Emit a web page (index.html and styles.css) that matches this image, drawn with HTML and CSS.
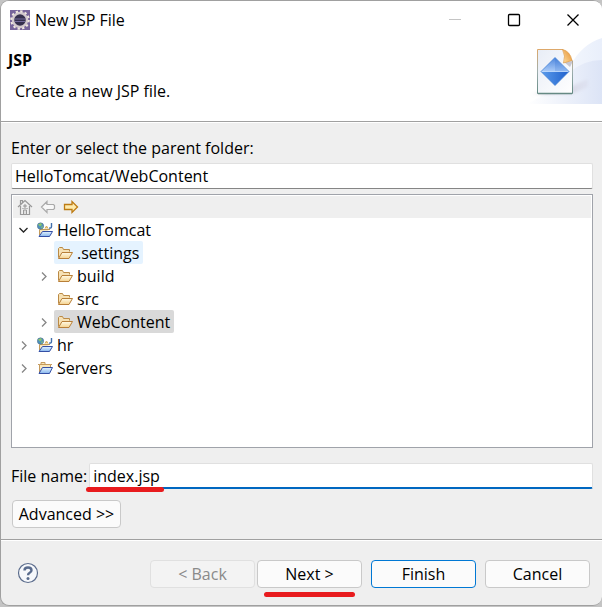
FILE: index.html
```html
<!DOCTYPE html>
<html lang="en">
<head>
<meta charset="utf-8">
<title>New JSP File</title>
<link rel="stylesheet" href="styles.css">
</head>
<body>
<svg class="defs" aria-hidden="true">
  <defs>
    <linearGradient id="tan" x1="0" y1="0" x2="0" y2="1"><stop offset="0" stop-color="#fffbe8"/><stop offset="1" stop-color="#f5d28d"/></linearGradient>
    <linearGradient id="sky" x1="0" y1="0" x2="0" y2="1"><stop offset="0" stop-color="#e4f4ff"/><stop offset="1" stop-color="#86b5ee"/></linearGradient>
    <symbol id="folder" viewBox="0 0 16 16">
      <path d="M1.500 12.500V3.500L2.500 2.500H5.500L6.500 4.500H12.500V6.500" fill="#f6e1b4" stroke="#bb8a45"/>
      <path d="M1.500 13.500L5 7.500H15.500L12 13.500Z" fill="url(#tan)" stroke="#b87f38"/>
    </symbol>
    <symbol id="web" viewBox="0 0 16 16">
      <path d="M2.500 13V7.500H13" fill="#f8e5bb" stroke="#c39b5b"/>
      <path d="M2 14.500L5.500 9.500H15.500L12.500 14.500Z" fill="url(#sky)" stroke="#344fa5"/>
      <circle cx="3.500" cy="4" r="3.200" fill="#4d91bd" stroke="#536b87" stroke-width=".5"/>
      <path d="M1 2.500L4 1L5 3L3 4.500L2 3.500ZM4 5L6 4L5 7Z" fill="#8bc46d"/>
      <path d="M8 6.500L9.500 4L11 6.500" fill="#f0ca7b" stroke="#d4aa59"/>
      <path d="M14.500 1V4.500Q14.500 6.500 12 6" fill="none" stroke="#416fac" stroke-width="1.400"/>
    </symbol>
    <symbol id="project" viewBox="0 0 16 16">
      <path d="M2.500 13V4.500H13.500V7M1 4.500H2.500M13.500 4.500H15M4 4V2.500H8V4" fill="#fae7b9" stroke="#c49a5d"/>
      <path d="M2 13.500L5.500 7.500H15.500L12.500 13.500Z" fill="url(#sky)" stroke="#344fa5"/>
    </symbol>
    <symbol id="chevron" viewBox="0 0 10 10"><path d="M3 1.500L7 5.500L3 9.500" fill="none" stroke="currentColor" stroke-width="1.300"/></symbol>
  </defs>
</svg>
<main class="window">
  <header class="titlebar">
    <svg class="app-icon" viewBox="0 0 20 20" aria-hidden="true">
      <path d="M0 0H20V20H0Z" fill="#77659b"/>
      <circle cx="10" cy="10" r="7" fill="#35304d" stroke="#d2c9cd" stroke-width="2.500"/>
      <circle cx="10" cy="10" r="8.800" fill="none" stroke="#eee7df" stroke-width="2" stroke-dasharray="2.400 2.200"/>
      <path d="M4.500 9H15.500M5 11.500H15" stroke="#736b9b" stroke-width="1"/>
    </svg>
    <span class="caption">New JSP File</span>
    <button class="win-button" aria-label="Minimize" disabled><svg viewBox="0 0 14 14"><path d="M1 6.500H13" stroke="#c4c4c4"/></svg></button>
    <button class="win-button" aria-label="Maximize"><svg viewBox="0 0 14 14"><rect x="1.500" y="1.500" width="11" height="11" rx="1" fill="none" stroke="#000" stroke-width="1.300"/></svg></button>
    <button class="win-button" aria-label="Close"><svg viewBox="0 0 14 14"><path d="M1.500 1.500L12.500 12.500M12.500 1.500L1.500 12.500" stroke="#000" stroke-width="1.300"/></svg></button>
  </header>
  <section class="banner">
    <div class="banner-text">
      <h1>JSP</h1>
      <p>Create a new JSP file.</p>
    </div>
    <svg class="banner-art" viewBox="0 0 75 66" aria-hidden="true">
      <defs>
        <linearGradient id="wave"><stop offset="0" stop-color="#fff"/><stop offset="1" stop-color="#dce4f6"/></linearGradient>
        <linearGradient id="haze" x1="0" x2="1"><stop offset="0" stop-color="#fff"/><stop offset="1" stop-color="#e9effb"/></linearGradient>
        <linearGradient id="shadow" x1="0" x2="1"><stop offset="0" stop-color="#9c94ad" stop-opacity=".8"/><stop offset="1" stop-color="#cac6d6" stop-opacity=".2"/></linearGradient>
        <linearGradient id="paper" x1="0" y1="0" x2="1" y2="1"><stop offset="0" stop-color="#e8edf6"/><stop offset="1" stop-color="#fff"/></linearGradient>
        <linearGradient id="edge" x1="0" y1="0" x2="0" y2="1"><stop offset="0" stop-color="#dda86a"/><stop offset=".5" stop-color="#9eaeae"/><stop offset="1" stop-color="#638982"/></linearGradient>
        <linearGradient id="gemTop" x1="0" y1="0" x2="0" y2="1"><stop offset="0" stop-color="#4d86dd"/><stop offset="1" stop-color="#aacbf8"/></linearGradient>
        <linearGradient id="gemBottom" x1="0" x2="1"><stop offset="0" stop-color="#5b9cec"/><stop offset="1" stop-color="#1f60cc"/></linearGradient>
        <linearGradient id="curl" x1="0" y1="1" x2="1" y2="0"><stop offset="0" stop-color="#ffe0a0"/><stop offset="1" stop-color="#e38b2d"/></linearGradient>
        <filter id="soft" x="-20%" y="-20%" width="140%" height="140%"><feGaussianBlur stdDeviation="1.500"/></filter>
      </defs>
      <path d="M0 66Q32 48 43 28Q55 6 75 0V66Z" fill="url(#haze)"/>
      <path d="M0 66Q28 54 43 34Q57 22 75 22V66Z" fill="url(#wave)"/>
      <path d="M43 49L61 41V49L45 56H8L4 57Q16 53 43 53Z" fill="url(#shadow)" filter="url(#soft)"/>
      <path d="M10.500 11.500H36L45.500 23V55.500H10.500Z" fill="url(#paper)" stroke="url(#edge)"/>
      <path d="M11 55.500H45" stroke="#668a84" stroke-width="1.500"/>
      <path d="M37 24L46 23L43 29Z" fill="#9896a5" opacity=".5"/>
      <path d="M35.500 11.500Q43 13 45 22.500L36.500 25Q39 18 35.500 11.500Z" fill="url(#curl)" stroke="#df9c48" stroke-width=".7"/>
      <path d="M28 19.500L42 33.500H14Z" fill="url(#gemTop)"/>
      <path d="M14 33.500H42L28 47.500Z" fill="url(#gemBottom)"/>
      <path d="M28 20V33.500H41Z" fill="#2466cb" opacity=".18"/>
      <path d="M15 33.500H41" stroke="#c7e0ff" stroke-width=".8"/>
      <path d="M28 19.500L42 33.500L28 47.500L14 33.500Z" fill="none" stroke="#397bd3" stroke-width=".7"/>
    </svg>
  </section>
  <section class="content">
    <label class="folder-label" for="folder-input">Enter or select the parent folder:</label>
    <input id="folder-input" class="field" type="text" value="HelloTomcat/WebContent">
    <div class="browser">
      <div class="toolbar">
        <button aria-label="Home" disabled><svg viewBox="0 0 16 16"><path d="M3.500 7V15.500H12.500V7M1 8L8 1.500L15 8M3.500 5V1.500H5.500V3.500" fill="none" stroke="#999" stroke-width="1.200"/><path d="M6.500 15V11H9.500V15M7 6H9V8H7Z" fill="#ddd" stroke="#999"/><path d="M5 9.500H11" stroke="#bbb"/></svg></button>
        <button aria-label="Back" disabled><svg viewBox="0 0 16 16"><path d="M1.500 8L7 2.500V5.500H13.500L14.500 6.500V9.500L13.500 10.500H7V13.500Z" fill="#f8f8f8" stroke="#aaa" stroke-width="1.200"/></svg></button>
        <button aria-label="Go into"><svg viewBox="0 0 16 16"><path d="M14.500 8L9 2.500V5.500H1.500V10.500H9V13.500Z" fill="#ffebad" stroke="#bd7b13" stroke-width="1.300"/></svg></button>
      </div>
      <ul class="tree" role="tree">
        <li role="treeitem" aria-expanded="true">
          <div class="row"><svg class="twist open"><use href="#chevron"/></svg><span class="item"><svg><use href="#web"/></svg>HelloTomcat</span></div>
          <ul role="group">
            <li role="treeitem"><div class="row"><i class="twist"></i><span class="item hovered"><svg><use href="#folder"/></svg>.settings</span></div></li>
            <li role="treeitem"><div class="row"><svg class="twist"><use href="#chevron"/></svg><span class="item"><svg><use href="#folder"/></svg>build</span></div></li>
            <li role="treeitem"><div class="row"><i class="twist"></i><span class="item"><svg><use href="#folder"/></svg>src</span></div></li>
            <li role="treeitem" aria-selected="true"><div class="row"><svg class="twist"><use href="#chevron"/></svg><span class="item selected"><svg><use href="#folder"/></svg>WebContent</span></div></li>
          </ul>
        </li>
        <li role="treeitem"><div class="row"><svg class="twist"><use href="#chevron"/></svg><span class="item"><svg><use href="#web"/></svg>hr</span></div></li>
        <li role="treeitem"><div class="row"><svg class="twist"><use href="#chevron"/></svg><span class="item"><svg><use href="#project"/></svg>Servers</span></div></li>
      </ul>
    </div>
    <div class="file-row">
      <label for="file-input">File name:</label>
      <div class="marked">
        <input id="file-input" class="field active" type="text" value="index.jsp">
        <span class="marker"></span>
      </div>
    </div>
    <button class="button advanced">Advanced &gt;&gt;</button>
  </section>
  <footer class="actions">
    <button class="help" aria-label="Help"><svg viewBox="0 0 22 22"><circle cx="11" cy="11" r="9.500" fill="#f6f8fb" stroke="#5c6d8d" stroke-width="1.200"/><path d="M7.500 8.500Q7.500 5.500 11 5.500Q14.500 5.500 14.500 8.200Q14.500 9.800 12.700 10.700Q11 11.600 11 13.300" fill="none" stroke="#596b8d" stroke-width="2.400"/><circle cx="11" cy="16.500" r="1.500" fill="#596b8d"/></svg></button>
    <div class="pair">
      <button class="button" disabled>&lt; Back</button>
      <div class="marked"><button class="button">Next &gt;</button><span class="marker"></span></div>
    </div>
    <button class="button default">Finish</button>
    <button class="button">Cancel</button>
  </footer>
</main>
</body>
</html>
```

FILE: styles.css
```css
* { box-sizing: border-box; }

body {
  margin: 0;
  min-height: 100vh;
  display: flex;
  padding-bottom: 1px;
  background: #c4c4c4;
  color: #000;
  font: 16px/22px "Open Sans", "Noto Sans", sans-serif;
}

button, input { font: inherit; color: inherit; }
button { padding: 0; border: 0; background: none; }
svg { display: block; flex: none; }
ul { margin: 0; padding: 0; list-style: none; }
.defs { position: absolute; width: 0; height: 0; }

.window {
  flex: 1;
  min-width: 0;
  display: flex;
  flex-direction: column;
  overflow: hidden;
  border: 1px solid #a0a0a0;
  border-right: 0;
  border-radius: 9px;
  background: #efefef;
}

.titlebar {
  display: flex;
  align-items: center;
  height: 37px;
  padding-left: 9px;
  background: #fff;
}
.app-icon { width: 20px; height: 20px; margin-right: 5px; }
.caption { flex: 1; }
.win-button { width: 59px; height: 36px; display: grid; place-items: center; }
.win-button svg { width: 14px; height: 14px; }

.banner {
  display: flex;
  justify-content: space-between;
  height: 84px;
  border-bottom: 1px solid #a0a0a0;
  background: #fff;
}
.banner-text { padding: 11px 0 0 7px; }
.banner h1 { margin: 0; font-size: 16px; line-height: 22px; }
.banner p { margin: 9px 0 0 7px; }
.banner-art { width: 75px; height: 66px; }

.content {
  flex: 1;
  display: flex;
  flex-direction: column;
  padding: 14px 9px 11px 10px;
  border-top: 1px solid #fff;
}
.folder-label { margin-bottom: 4px; }

.field {
  width: 100%;
  height: 26px;
  padding: 0 3px;
  border: 1px solid #e0e0e0;
  border-bottom-color: #858585;
  border-radius: 2px;
  background: #fff;
  outline: 0;
}
.field.active { border-bottom: 2px solid #0067c0; }

.browser {
  flex: 1;
  margin-top: 5px;
  padding: 1px;
  border: 1px solid #a0a3aa;
  background: #fff;
}
.toolbar {
  display: flex;
  align-items: center;
  gap: 7px;
  height: 22px;
  padding-left: 4px;
  background: #efefef;
}
.toolbar svg { width: 16px; height: 16px; }

.tree { padding-left: 6px; }
.tree ul { padding-left: 20px; }
.row { display: flex; align-items: center; gap: 5px; height: 23px; }
.twist { width: 10px; height: 10px; color: #858585; }
.twist.open { color: #222; transform: rotate(90deg); }
.item {
  display: flex;
  align-items: center;
  gap: 4px;
  height: 23px;
  padding: 0 4px 0 3px;
  border-radius: 2px;
}
.item svg { width: 16px; height: 16px; }
.hovered { background: #e5f3ff; }
.selected { background: #d9d9d9; }

.file-row { display: flex; align-items: center; gap: 2px; margin-top: 15px; }
.marked { position: relative; }
.file-row .marked { flex: 1; display: flex; }
.marker {
  position: absolute;
  height: 5px;
  border-radius: 3px;
  background: #e81b1e;
}
.file-row .marker { left: -3px; bottom: -3px; width: 78px; }
.actions .marker { left: 7px; right: 7px; bottom: -9px; }

.button {
  display: block;
  width: 105px;
  height: 28px;
  border: 1px solid #c9c9c9;
  border-radius: 4px;
  background: #fbfbfb;
}
.button:disabled { border-color: #e0e0e0; background: #f3f3f3; color: #8a8a8a; }
.button.default { border-color: #0078d4; }
.button.advanced { width: 109px; margin: 11px 0 0 1px; }

.actions {
  display: flex;
  align-items: flex-start;
  gap: 9px;
  height: 66px;
  padding: 20px 12px 0 16px;
  border-top: 1px solid #a0a0a0;
  box-shadow: inset 0 1px #fff;
}
.help { width: 22px; height: 22px; margin: 2px auto 0 0; }
.pair { display: flex; gap: 2px; }
```
